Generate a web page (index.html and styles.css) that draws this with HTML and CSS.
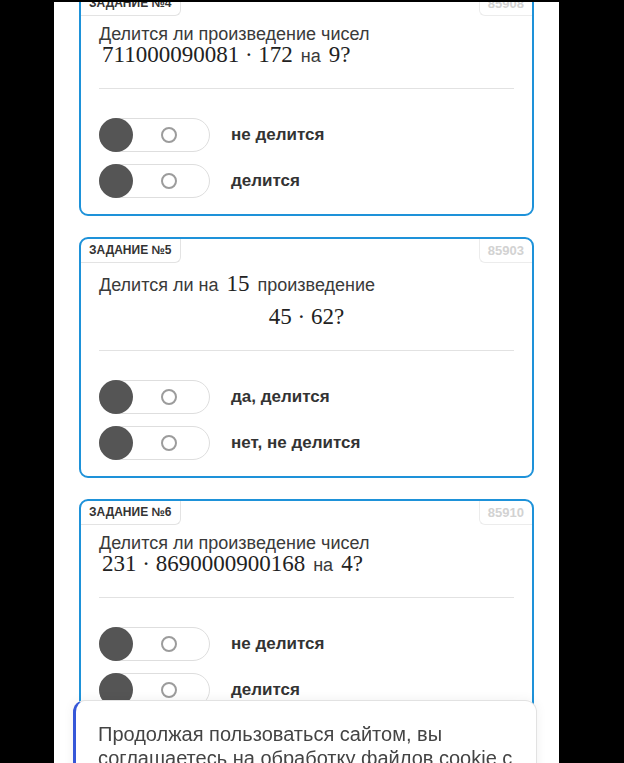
FILE: index.html
```html
<!DOCTYPE html>
<html lang="ru">
<head>
  <meta charset="UTF-8">
  <meta name="viewport" content="width=device-width, initial-scale=1.0">
  <title>Делимость произведения</title>
  <link rel="stylesheet" href="styles.css">
</head>
<body>
  <div class="screen">
    <div class="feed">

      <!-- Задание 4 -->
      <div class="card">
        <div class="card-head">
          <span class="tab">Задание №4</span>
          <span class="tab-id">85908</span>
        </div>
        <div class="question">
          <p>Делится ли произведение чисел<br>
            <span class="math">711000090081 · 172</span> на <span class="math">9?</span></p>
        </div>
        <hr class="divider">
        <div class="options">
          <div class="option"><span class="toggle"><span class="knob"></span><span class="dot"></span></span><span class="label">не делится</span></div>
          <div class="option"><span class="toggle"><span class="knob"></span><span class="dot"></span></span><span class="label">делится</span></div>
        </div>
      </div>

      <!-- Задание 5 -->
      <div class="card">
        <div class="card-head">
          <span class="tab">Задание №5</span>
          <span class="tab-id">85903</span>
        </div>
        <div class="question">
          <p class="lead">Делится ли на <span class="math">15</span> произведение</p>
          <p class="display"><span class="math">45 · 62?</span></p>
        </div>
        <hr class="divider">
        <div class="options">
          <div class="option"><span class="toggle"><span class="knob"></span><span class="dot"></span></span><span class="label">да, делится</span></div>
          <div class="option"><span class="toggle"><span class="knob"></span><span class="dot"></span></span><span class="label">нет, не делится</span></div>
        </div>
      </div>

      <!-- Задание 6 -->
      <div class="card">
        <div class="card-head">
          <span class="tab">Задание №6</span>
          <span class="tab-id">85910</span>
        </div>
        <div class="question">
          <p>Делится ли произведение чисел<br>
            <span class="math">231 · 8690000900168</span> на <span class="math">4?</span></p>
        </div>
        <hr class="divider">
        <div class="options">
          <div class="option"><span class="toggle"><span class="knob"></span><span class="dot"></span></span><span class="label">не делится</span></div>
          <div class="option"><span class="toggle"><span class="knob"></span><span class="dot"></span></span><span class="label">делится</span></div>
        </div>
      </div>

    </div>
  </div>

  <!-- Плашка про cookie -->
  <div class="cookie">
    <p>Продолжая пользоваться сайтом, вы<br>соглашаетесь на обработку файлов cookie с<br>целью улучшения работы сайта.</p>
  </div>
</body>
</html>
```

FILE: styles.css
```css
body {
  margin: 0;
  padding-top: 2px;
  background-color: #000;
  font-family: "Liberation Sans", Arial, sans-serif;
  color: #333;
}
.screen {
  width: 505px;
  height: 761px;
  margin-left: 54px;
  background-color: #fff;
  overflow: hidden;
}
.feed {
  margin-top: -12px;
  padding: 0 25px;
}
.card {
  border: 2px solid #1e92d9;
  border-radius: 9px;
  margin-bottom: 21px;
  padding-bottom: 16px;
}
.card-head {
  display: flex;
  justify-content: space-between;
  align-items: flex-start;
}
.tab {
  padding: 0 8px;
  height: 23px;
  line-height: 23px;
  border-right: 1px solid #e3e3e3;
  border-bottom: 1px solid #e3e3e3;
  border-bottom-right-radius: 6px;
  font-size: 12px;
  font-weight: bold;
  text-transform: uppercase;
  color: #333;
}
.tab-id {
  padding: 0 8px;
  height: 23px;
  line-height: 23px;
  border-left: 1px solid #ececec;
  border-bottom: 1px solid #ececec;
  border-bottom-left-radius: 6px;
  font-size: 13px;
  font-weight: bold;
  color: #d2d2d2;
}
.question {
  padding: 0 18px;
  font-size: 18px;
  color: #3a3a3a;
}
.question p {
  margin: 7px 0 0;
  line-height: 22px;
}
.question .lead {
  margin-top: 11px;
}
.question .display {
  margin-top: 11px;
  text-align: center;
}
.math {
  font-family: "Liberation Serif", "Times New Roman", serif;
  font-size: 23px;
  line-height: 0;
  color: #222;
  padding: 0 3px;
}
.divider {
  border: none;
  border-top: 1px solid #e2e2e2;
  margin: 21px 18px 0;
}
.options {
  padding: 29px 18px 0;
}
.option {
  display: flex;
  align-items: center;
  gap: 21px;
  margin-bottom: 12px;
}
.option:last-child {
  margin-bottom: 0;
}
.toggle {
  display: flex;
  align-items: center;
  width: 111px;
  height: 34px;
  box-sizing: border-box;
  border: 1px solid #dedede;
  border-radius: 17px;
}
.knob {
  width: 34px;
  height: 34px;
  margin-left: -1px;
  border-radius: 50%;
  background-color: #555;
}
.dot {
  width: 12px;
  height: 12px;
  margin-left: 28px;
  border: 2px solid #9c9c9c;
  border-radius: 50%;
}
.label {
  font-size: 17px;
  font-weight: bold;
  color: #333;
}
.cookie {
  position: fixed;
  left: 73px;
  top: 700px;
  width: 464px;
  height: 140px;
  box-sizing: border-box;
  padding: 21px 20px 20px 22px;
  background-color: #fff;
  border: 1px solid #e2e2e2;
  border-left: 3px solid #3557d8;
  border-radius: 12px;
  box-shadow: 0 0 12px rgba(0, 0, 0, 0.06);
}
.cookie p {
  margin: 0;
  font-size: 20px;
  line-height: 24px;
  color: #444;
}
```
